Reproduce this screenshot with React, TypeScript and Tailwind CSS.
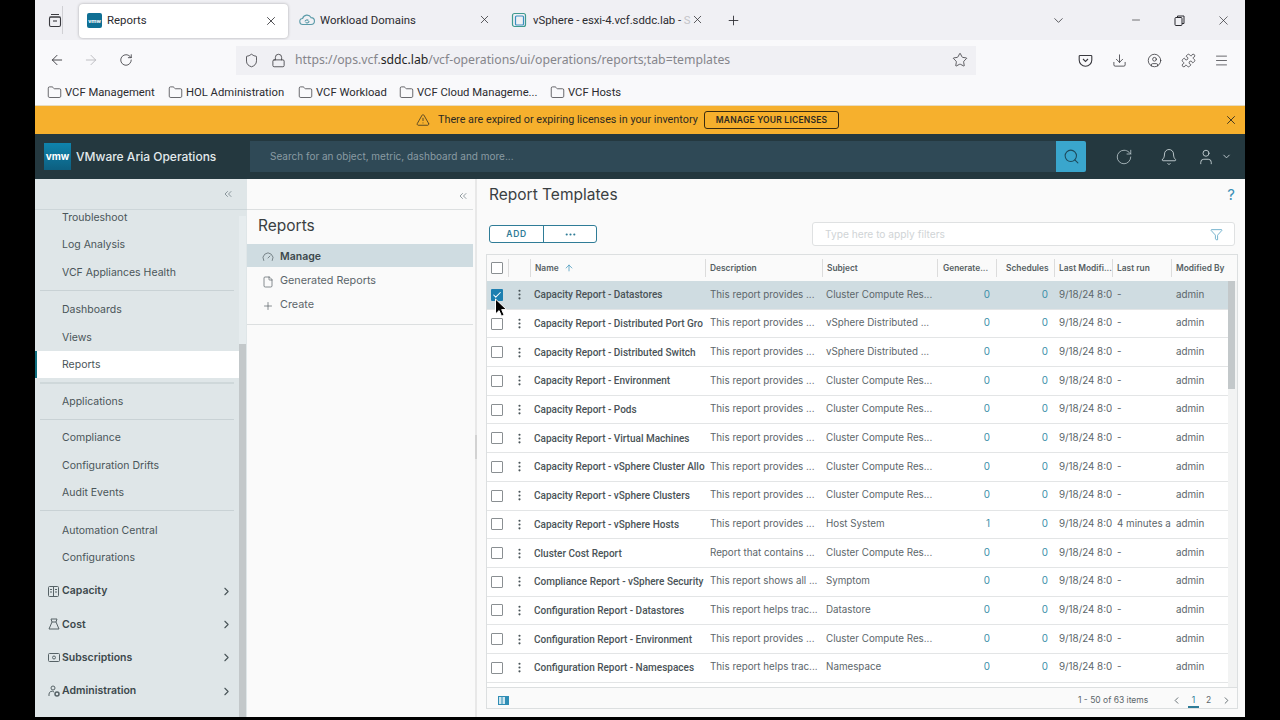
import React from 'react';
import {
  ArrowLeft, ArrowRight, RotateCw, Shield, Lock, Star, Download, CircleUser, Puzzle, Menu, X, Plus,
  ChevronDown, Minus, TriangleAlert, Search, Bell, User, ChevronsLeft, Funnel, ChevronRight, ChevronLeft,
  EllipsisVertical, Ellipsis, ArrowUp, File, Gauge, Folder, Check,
} from 'lucide-react';

const browserFont = "font-['Roboto',sans-serif]";
const urlFont = "font-['Noto_Sans',sans-serif]";
const appFont = "font-['Inter',sans-serif]";

interface Report {
  name: string;
  description: string;
  subject: string;
  generated?: number;
  lastRun?: string;
}

const provides = 'This report provides ...';
const cluster = 'Cluster Compute Res...';
const distributed = 'vSphere Distributed ...';

const reports: Report[] = [
  { name: 'Capacity Report - Datastores', description: provides, subject: cluster },
  { name: 'Capacity Report - Distributed Port Gro', description: provides, subject: distributed },
  { name: 'Capacity Report - Distributed Switch', description: provides, subject: distributed },
  { name: 'Capacity Report - Environment', description: provides, subject: cluster },
  { name: 'Capacity Report - Pods', description: provides, subject: cluster },
  { name: 'Capacity Report - Virtual Machines', description: provides, subject: cluster },
  { name: 'Capacity Report - vSphere Cluster Allo', description: provides, subject: cluster },
  { name: 'Capacity Report - vSphere Clusters', description: provides, subject: cluster },
  { name: 'Capacity Report - vSphere Hosts', description: provides, subject: 'Host System', generated: 1, lastRun: '4 minutes a' },
  { name: 'Cluster Cost Report', description: 'Report that contains ...', subject: cluster },
  { name: 'Compliance Report - vSphere Security', description: 'This report shows all ...', subject: 'Symptom' },
  { name: 'Configuration Report - Datastores', description: 'This report helps trac...', subject: 'Datastore' },
  { name: 'Configuration Report - Environment', description: provides, subject: cluster },
  { name: 'Configuration Report - Namespaces', description: 'This report helps trac...', subject: 'Namespace' },
];

const cols = 'grid grid-cols-[21px_22px_175px_117px_115px_59px_58px_58px_59px_57px]';

const Box = () => <span className="block w-[12px] h-[12px] border border-[#8a8f92] rounded-[1px] bg-white" />;

const HeaderCell = ({ label, pl = 'pl-[5px]' }: { label: string; pl?: string }) => (
  <div className={`h-[18px] border-l border-[#dcdcdc] flex items-center whitespace-nowrap overflow-hidden ${pl}`}>{label}</div>
);

const Bookmark = ({ label, className }: { label: string; className: string }) => (
  <div className={`flex items-center gap-[3px] ${className}`}>
    <Folder size={15} strokeWidth={1.2} className="text-[#3a3a3f]" />
    <span className="pt-[2px]">{label}</span>
  </div>
);

const NavItem = ({ label }: { label: string }) => (
  <div className="h-[27.5px] pl-[27px] pt-[2px] flex items-center text-[10.5px] text-[#4a5559]">{label}</div>
);

const NavDivider = () => <div className="mx-[5px] my-[4px] border-t border-[#c9d2d5]" />;

const NavGroup = ({ icon, label }: { icon: React.ReactNode; label: string }) => (
  <div className="h-[33.3px] pl-[13px] pr-[6px] pt-[1px] flex items-center text-[10.5px] font-semibold text-[#3c484c]">
    <span className="w-[14px] flex justify-start text-[#566266]">{icon}</span>
    <span className="flex-1">{label}</span>
    <ChevronRight size={13} strokeWidth={2} className="text-[#4a5559]" />
  </div>
);

const App: React.FC = () => {
  return (
    <div className="w-[1280px] h-[720px] bg-black px-[35px] pb-[3px] overflow-hidden">
      <div className="h-full flex flex-col bg-white">
        {/* browser tabs */}
        <div className={`h-[40px] shrink-0 bg-[#f0f0f4] flex items-center text-[11.4px] text-[#2b2b30] ${browserFont}`}>
          <div className="w-[27px] ml-[6px] flex justify-center">
            <svg width="14" height="15" viewBox="0 0 14 15" fill="none" stroke="#3a3a3f" strokeWidth="1.1">
              <path d="M3 1.5h8M1.5 4h11" />
              <rect x="1.5" y="4" width="11" height="9.5" rx="1.5" />
              <path d="M5 8h4" />
            </svg>
          </div>
          <div className="h-[28px] ml-[-6px] mr-[16px] w-px bg-[#d0d0d4]" />
          <div className="w-[209px] h-[34px] mt-[1px] bg-white rounded-[4px] shadow-[0_0_3px_rgba(0,0,0,0.3)] flex items-center pl-[8px] pr-[10px]">
            <span className="w-[15px] h-[15px] rounded-[2px] bg-[#0f6f94] text-white text-[6px] font-bold flex items-center justify-center">vmw</span>
            <span className="ml-[5px] flex-1">Reports</span>
            <X size={14} strokeWidth={1.4} />
          </div>
          <div className="w-[210px] flex items-center pl-[11px] pr-[7px]">
            <svg width="16" height="14" viewBox="0 0 16 14" fill="none" stroke="#5a9aa8" strokeWidth="1.1">
              <path d="M4 11.5a3 3 0 0 1-.4-6A4.5 4.5 0 0 1 12 4.6a3.4 3.4 0 0 1 0 6.9z" />
              <path d="M6 8.5a2 2 0 0 1 3.4-1M10 8a2 2 0 0 1-3.4 1.4" />
            </svg>
            <span className="ml-[5px] pt-[2px] flex-1">Workload Domains</span>
            <X size={13} strokeWidth={1.4} />
          </div>
          <div className="w-[211px] flex items-center pl-[13px]">
            <svg width="16" height="16" viewBox="0 0 16 16" fill="none" strokeWidth="1.2">
              <rect x="1.5" y="1.5" width="13" height="13" rx="2" stroke="#3f9a8f" />
              <rect x="4.5" y="4" width="8" height="9" rx="1" stroke="#3a8fc0" />
            </svg>
            <span className="ml-[6px] pt-[2px] w-[157px] tracking-[-0.06px] whitespace-nowrap">vSphere - esxi-4.vcf.sddc.lab - <span className="text-[#c4c4c8]">S</span></span>
            <X size={13} strokeWidth={1.4} className="ml-[1px]" />
          </div>
          <Plus size={15} strokeWidth={1.4} className="ml-[17px]" />
          <div className="flex-1" />
          <ChevronDown size={15} strokeWidth={1.2} className="mr-[64px]" />
          <Minus size={12} strokeWidth={1.3} className="mr-[32px]" />
          <svg width="11" height="11" viewBox="0 0 11 11" fill="none" stroke="#2b2b30" strokeWidth="1" className="mr-[31px]">
            <rect x="1" y="2.5" width="7" height="8" rx="1" />
            <path d="M3.5 2.5V1h6.5v7.5H8" />
          </svg>
          <X size={15} strokeWidth={1.1} className="mr-[14px]" />
        </div>

        {/* url bar */}
        <div className={`h-[40px] shrink-0 bg-[#f9f9fb] flex items-center text-[#3a3a3f] ${urlFont}`}>
          <ArrowLeft size={16} strokeWidth={1.4} className="ml-[14px]" />
          <ArrowRight size={16} strokeWidth={1.3} className="ml-[18px] text-[#b5b5b9]" />
          <RotateCw size={14} strokeWidth={1.4} className="ml-[20px]" />
          <div className="w-[740px] h-[29px] ml-[103px] bg-[#f0f0f4] flex items-center pl-[8px] pr-[8px]">
            <Shield size={15} strokeWidth={1.3} />
            <Lock size={15} strokeWidth={1.3} className="ml-[12px]" />
            <div className="ml-[9px] pt-[1px] flex-1 text-[12.25px] text-[#85858b] whitespace-nowrap">
              https://ops.vcf.<span className="text-[#1f1f24]">sddc.lab</span>/vcf-operations/ui/operations/reports;tab=templates
            </div>
            <Star size={16} strokeWidth={1.2} />
          </div>
          <svg width="15" height="15" viewBox="0 0 15 15" fill="none" stroke="#3a3a3f" strokeWidth="1.1" className="ml-[102px]">
            <path d="M2 2.5h11a.8.8 0 0 1 .8.8V7a6.3 6.3 0 0 1-12.6 0V3.3a.8.8 0 0 1 .8-.8z" />
            <path d="M5 6l2.5 2.5L10 6" />
          </svg>
          <Download size={15} strokeWidth={1.3} className="ml-[19px]" />
          <CircleUser size={15} strokeWidth={1.3} className="ml-[20px]" />
          <Puzzle size={15} strokeWidth={1.3} className="ml-[19px]" />
          <Menu size={15} strokeWidth={1.2} className="ml-[18px]" />
        </div>

        {/* bookmarks */}
        <div className={`h-[25px] shrink-0 bg-[#f9f9fb] flex items-center pb-[1px] pl-[12px] text-[11.25px] text-[#2b2b30] ${browserFont}`}>
          <Bookmark label="VCF Management" className="w-[121px]" />
          <Bookmark label="HOL Administration" className="w-[130px]" />
          <Bookmark label="VCF Workload" className="w-[101px]" />
          <Bookmark label="VCF Cloud Manageme..." className="w-[151px]" />
          <Bookmark label="VCF Hosts" className="w-[90px]" />
        </div>

        {/* license banner */}
        <div className={`h-[29px] shrink-0 bg-[#f6b02d] border-t border-[#e8dcc0] flex items-center text-[10.5px] text-[#2d2a22] ${appFont}`}>
          <TriangleAlert size={14} strokeWidth={1.3} className="ml-[381px]" />
          <span className={`ml-[8px] w-[266px] text-[10.8px] whitespace-nowrap ${browserFont}`}>There are expired or expiring licenses in your inventory</span>
          <span className="w-[135px] h-[18px] border border-[#3a2c10] rounded-[3px] flex items-center justify-center text-[8.5px] font-semibold tracking-[0.2px]">MANAGE YOUR LICENSES</span>
          <div className="flex-1" />
          <X size={14} strokeWidth={1.5} className="mr-[7px]" />
        </div>

        {/* app header */}
        <div className={`h-[45px] shrink-0 bg-[#24383f] flex items-center ${appFont}`}>
          <span className="ml-[9px] w-[27px] h-[27px] bg-gradient-to-b from-[#0f84ad] to-[#0d5f80] text-white text-[10px] font-bold flex items-center justify-center">vmw</span>
          <span className="ml-[5px] w-[174px] text-[12px] font-medium text-[#e3eaec] whitespace-nowrap">VMware Aria Operations</span>
          <div className="w-[806px] h-[31px] bg-[#2f4956] flex items-center pl-[20px] text-[10px] text-[#8a9ba3]">Search for an object, metric, dashboard and more...</div>
          <div className="w-[30px] h-[31px] bg-[#3aa6cd] rounded-r-[2px] flex items-center justify-center">
            <Search size={17} strokeWidth={1.5} className="text-[#1d4a5c]" />
          </div>
          <RotateCw size={18} strokeWidth={1.1} className="ml-[29px] text-[#b9c6cb]" />
          <Bell size={18} strokeWidth={1.2} className="ml-[27px] text-[#c7d2d6]" />
          <User size={18} strokeWidth={1.2} className="ml-[19px] text-[#c7d2d6]" />
          <ChevronDown size={11} strokeWidth={2} className="ml-[6px] text-[#c7d2d6]" />
        </div>

        <div className={`flex-1 min-h-0 flex ${appFont}`}>
          {/* main nav */}
          <div className="w-[212px] shrink-0 flex flex-col bg-[#dfe6e8]">
            <div className="h-[31px] shrink-0 border-b border-[#cdd6d9] flex items-center justify-end pr-[13px]">
              <ChevronsLeft size={12} strokeWidth={1.3} className="text-[#5b6b72]" />
            </div>
            <div className="flex-1 min-h-0 flex pr-[1px]">
              <div className="flex-1 overflow-hidden">
                <div className="-mt-[7px]">
                  <NavItem label="Troubleshoot" />
                  <NavItem label="Log Analysis" />
                  <NavItem label="VCF Appliances Health" />
                  <NavDivider />
                  <div className="h-[1px]" />
                  <NavItem label="Dashboards" />
                  <NavItem label="Views" />
                  <div className="h-[27.5px] pl-[25px] pt-[2px] flex items-center text-[10.5px] text-[#4a5559] bg-white border-l-2 border-[#0f6f80]">Reports</div>
                  <div className="mx-[5px] mt-[4px] mb-[3px] border-t-2 border-[#cfd8da]" />
                  <NavItem label="Applications" />
                  <NavDivider />
                  <NavItem label="Compliance" />
                  <NavItem label="Configuration Drifts" />
                  <NavItem label="Audit Events" />
                  <NavDivider />
                  <div className="h-[1px]" />
                  <NavItem label="Automation Central" />
                  <NavItem label="Configurations" />
                  <div className="h-[3px]" />
                  <NavGroup label="Capacity" icon={
                    <svg width="11" height="11" viewBox="0 0 11 11" fill="none" stroke="currentColor"><rect x="0.5" y="0.5" width="10" height="10" rx="1" /><path d="M5.5 1v9M2 3.5h2M2 6h2M7 3.5h2M7 6h2" /></svg>
                  } />
                  <NavGroup label="Cost" icon={
                    <svg width="12" height="12" viewBox="0 0 12 12" fill="none" stroke="currentColor"><path d="M4 4L3 1h6L8 4zM4 4L1 11h10L8 4" /></svg>
                  } />
                  <NavGroup label="Subscriptions" icon={
                    <svg width="12" height="9" viewBox="0 0 12 9" fill="none" stroke="currentColor"><rect x="0.5" y="0.5" width="11" height="8" rx="1" /><circle cx="6" cy="4.5" r="1.5" /></svg>
                  } />
                  <NavGroup label="Administration" icon={
                    <svg width="12" height="12" viewBox="0 0 12 12" fill="none" stroke="currentColor"><circle cx="5" cy="3" r="2" /><path d="M1 11V9a3 3 0 0 1 5-2" /><circle cx="9" cy="9" r="2" strokeWidth="1.5" /></svg>
                  } />
                </div>
              </div>
              <div className="w-[7px] shrink-0 mt-[6px] bg-[#e6ecee] flex flex-col">
                <div className="h-[128px] shrink-0" />
                <div className="flex-1 bg-[#c3c8ca]" />
              </div>
            </div>
          </div>

          {/* reports nav */}
          <div className="w-[226px] shrink-0 bg-[#fafafa] flex flex-col">
            <div className="h-[31px] shrink-0 border-b border-[#dcdfe0] flex items-center justify-end pr-[4px] pt-[3px]">
              <ChevronsLeft size={12} strokeWidth={1.3} className="text-[#5b6b72]" />
            </div>
            <div className="pl-[11px] pt-[6px] h-[34px] shrink-0 text-[15.5px] text-[#3a3f42] leading-[20px]">Reports</div>
            <div className="h-[23px] pl-[15px] bg-[#cfdce1] flex items-center gap-[6px] pt-[2px] text-[10.5px] font-semibold text-[#3c484c]">
              <Gauge size={12} strokeWidth={1.3} className="text-[#4a5559]" />Manage
            </div>
            <div className="h-[25px] pl-[15px] mt-[1px] pt-[2px] flex items-center gap-[6px] text-[10.8px] text-[#5c666a]">
              <File size={12} strokeWidth={1.3} className="text-[#4a5559]" />Generated Reports
            </div>
            <div className="h-[23px] pl-[15px] pt-[2px] flex items-center gap-[6px] text-[10.8px] text-[#5c666a]">
              <Plus size={12} strokeWidth={1.3} className="text-[#4a5559]" />Create
            </div>
            <div className="mt-[8px] border-t border-[#dcdfe0]" />
          </div>
          <div className="w-[2px] shrink-0 bg-[#fafafa]" />
          <div className="w-[2px] shrink-0 bg-[#e8e8e8] flex flex-col">
            <div className="h-[256px]" />
            <div className="h-[24px] bg-[#d2d2d2]" />
          </div>

          {/* templates */}
          <div className="flex-1 min-w-0 bg-[#fafafa] pl-[9px] pr-[7px] flex flex-col">
            <div className="h-[30px] shrink-0 flex items-center justify-between pt-[2px] pl-[3px] pr-[3px]">
              <span className="text-[15.5px] text-[#3a3f42]">Report Templates</span>
              <span className="text-[15px] text-[#3a8fb5]">?</span>
            </div>
            <div className="h-[24px] mt-[13px] shrink-0 flex items-center pl-[3px] pr-[3px]">
              <div className="w-[108px] h-[18px] border border-[#2f7c97] rounded-[3px] flex text-[8.5px] font-semibold tracking-[0.6px] text-[#2f7c97] bg-white">
                <span className="w-[54px] border-r border-[#2f7c97] flex items-center justify-center">ADD</span>
                <span className="flex-1 flex items-center justify-center"><Ellipsis size={13} strokeWidth={2} /></span>
              </div>
              <div className="w-[423px] h-[24px] ml-auto bg-white border border-[#dfe1e2] rounded-[3px] flex items-center justify-between pl-[12px] pr-[11px] pt-[1px] text-[10.2px] text-[#d0d4d6]">
                Type here to apply filters
                <Funnel size={13} strokeWidth={1.2} className="text-[#2f8db5]" />
              </div>
            </div>

            <div className="h-[455px] mt-[8px] shrink-0 bg-white border border-[#dcdfe0] flex flex-col">
              <div className="h-[26px] shrink-0 bg-[#fafafa] flex">
                <div className={`${cols} items-center text-[8.4px] font-semibold text-[#565f63]`}>
                  <div className="pl-[4px]"><Box /></div>
                  <div className="h-[18px] border-l border-[#dcdcdc]" />
                  <div className="h-[18px] border-l border-[#dcdcdc] pl-[4px] flex items-center gap-[5px]">Name <ArrowUp size={10} strokeWidth={1.6} className="text-[#2f8db5]" /></div>
                  <HeaderCell label="Description" pl="pl-[4px]" />
                  <HeaderCell label="Subject" pl="pl-[4px]" />
                  <HeaderCell label="Generate..." />
                  <HeaderCell label="Schedules" pl="pl-[9px]" />
                  <HeaderCell label="Last Modifi..." pl="pl-[4px]" />
                  <HeaderCell label="Last run" pl="pl-[4px]" />
                  <HeaderCell label="Modified By" pl="pl-[4px]" />
                </div>
              </div>
              <div className="flex-1 min-h-0 flex">
                <div className="w-[741px] overflow-hidden">
                  {reports.map((r, i) => (
                    <div key={r.name} className={`${cols} h-[28.69px] items-center border-b border-[#e3e5e6] text-[9.8px] text-[#5c666a] whitespace-nowrap ${i === 0 ? 'bg-[#cfdce1]' : 'bg-white'}`}>
                      <div className="pl-[4px]">
                        {i === 0 ? (
                          <span className="flex w-[12px] h-[12px] rounded-[1px] bg-[#1d7fb0] items-center justify-center"><Check size={10} strokeWidth={2.5} className="text-white" /></span>
                        ) : <Box />}
                      </div>
                      <div className="flex justify-center text-[#4a5559]"><EllipsisVertical size={13} strokeWidth={2} /></div>
                      <div className="pl-[4px] overflow-hidden font-['Roboto',sans-serif] font-medium text-[#4a5357] text-[10px]">{r.name}</div>
                      <div className="pl-[5px] overflow-hidden">{r.description}</div>
                      <div className="pl-[4px] overflow-hidden">{r.subject}</div>
                      <div className="pr-[6px] text-right text-[#3a8fa8]">{r.generated ?? 0}</div>
                      <div className="pr-[6px] text-right text-[#3a8fa8]">0</div>
                      <div className="pl-[5px] overflow-hidden">9/18/24 8:0</div>
                      <div className="pl-[5px] overflow-hidden">{r.lastRun ?? '-'}</div>
                      <div className="pl-[5px]">admin</div>
                    </div>
                  ))}
                </div>
                <div className="flex-1 bg-[#f2f3f3]">
                  <div className="w-[7px] h-[108px] bg-[#c3c8ca]" />
                </div>
              </div>
              <div className="h-[21px] shrink-0 bg-[#fafafa] border-t border-[#dcdfe0] pt-[4px] flex items-center text-[8.5px] text-[#5c666a]">
                <svg width="11" height="9" viewBox="0 0 11 9" className="ml-[11px]">
                  <rect width="11" height="9" fill="#2f8db5" />
                  <path d="M1 1h2.5v7H1zM4.5 1H7v7H4.5z" fill="#cfe6ef" />
                </svg>
                <span className="ml-[569px] w-[90px]">1 - 50 of 63 items</span>
                <ChevronLeft size={11} strokeWidth={2} className="ml-[3px]" />
                <span className="ml-[6px] w-[11px] text-center text-[#2f7c97] border-b-2 border-[#2f7c97] h-[15px] pt-[1px]">1</span>
                <span className="ml-[4px] w-[11px] text-center">2</span>
                <ChevronRight size={11} strokeWidth={2} className="ml-[7px]" />
              </div>
            </div>
          </div>
        </div>
      </div>

      {/* mouse pointer */}
      <svg width="14" height="20" viewBox="0 0 14 20" className="absolute left-[494px] top-[298px]">
        <path d="M1.5 1v15l3.6-3.4 2.4 5.6 2.6-1.1-2.4-5.5H12.5z" fill="#000" stroke="#fff" strokeWidth="1" />
      </svg>
    </div>
  );
};

export default App;
